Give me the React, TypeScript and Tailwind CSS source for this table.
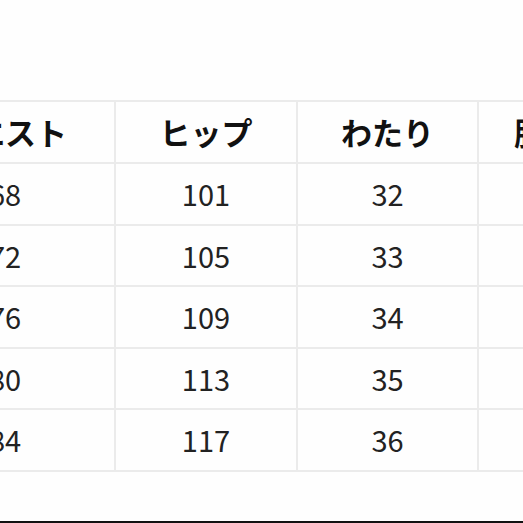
const HEADERS = ["ウエスト", "ヒップ", "わたり", "股上深さ"];

const ROWS = [
  ["68", "101", "32", ""],
  ["72", "105", "33", ""],
  ["76", "109", "34", ""],
  ["80", "113", "35", ""],
  ["84", "117", "36", ""],
];

const COLS = ["w-[220px]", "w-[182px]", "w-[181px]", "w-[182px] pl-[14px]"];

export default function App() {
  return (
    <div
      className="flex flex-col w-[523px] h-[523px] overflow-hidden bg-[#fefefe]"
      style={{ fontFamily: '"Noto Sans CJK JP", "Noto Sans", sans-serif' }}
    >
      <div className="pt-[100px] ml-[-104px]">
        <div className="flex w-max border-t-2 border-[#ebebeb]">
          {HEADERS.map((h, i) => (
            <div
              key={i}
              className={`${COLS[i]} shrink-0 h-[62px] flex items-center justify-center border-r-2 border-b-2 border-[#ebebeb] text-[31px] font-bold text-[#111]`}
            >
              {h}
            </div>
          ))}
        </div>
        {ROWS.map((row, r) => (
          <div key={r} className="flex w-max">
            {row.map((v, i) => (
              <div
                key={i}
                className={`${COLS[i]} shrink-0 h-[61.6px] flex items-center justify-center border-r-2 border-b-2 border-[#ebebeb] text-[29px] text-[#222]`}
              >
                {v}
              </div>
            ))}
          </div>
        ))}
      </div>
      <div className="mt-auto h-[2px] bg-[#111]" />
    </div>
  );
}
